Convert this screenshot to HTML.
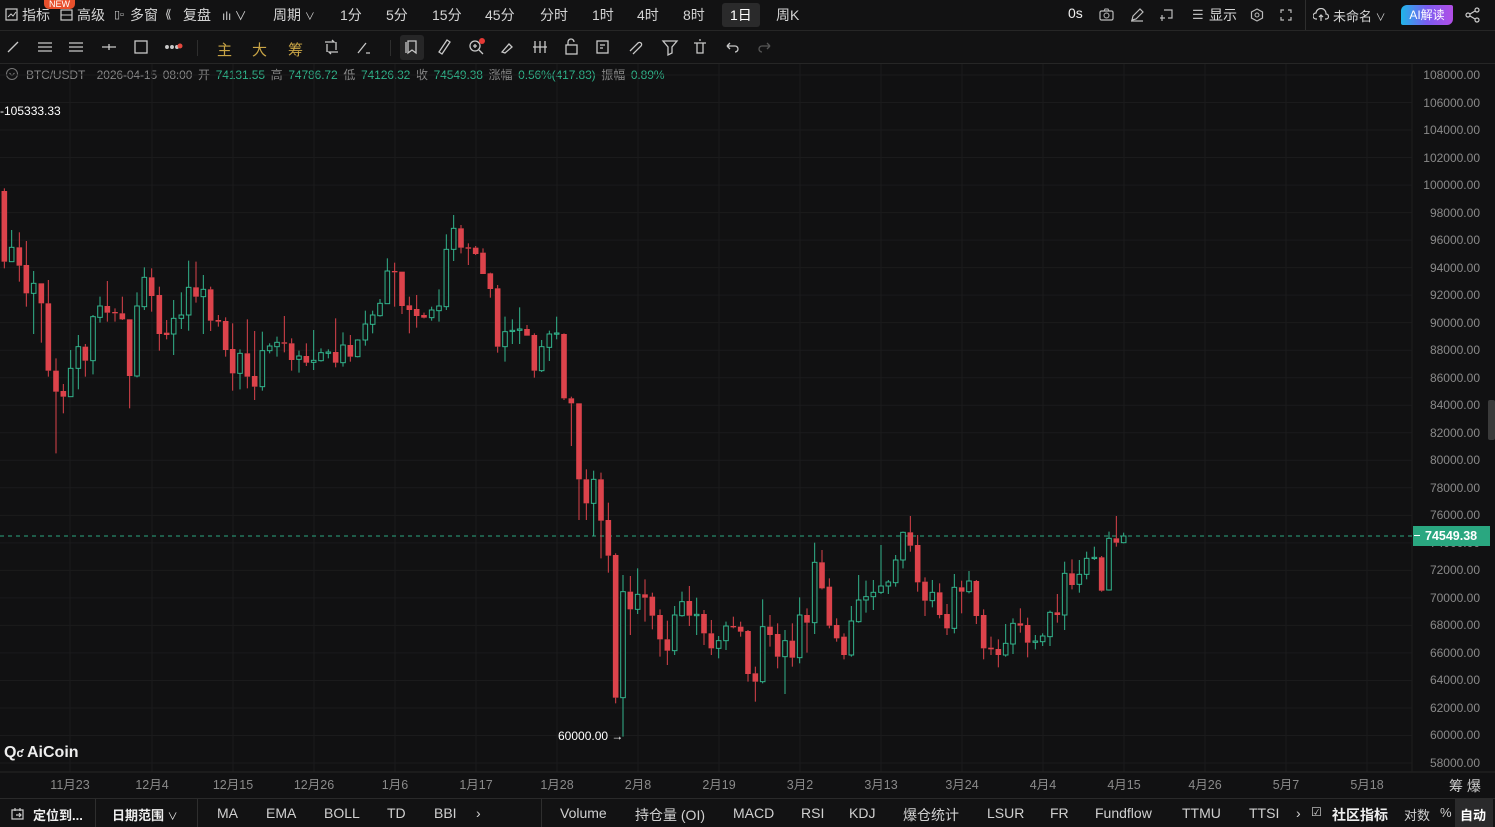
<!DOCTYPE html>
<html><head><meta charset="utf-8">
<style>
*{margin:0;padding:0;box-sizing:border-box}
body{width:1495px;height:827px;overflow:hidden;background:#111112;font-family:"Liberation Sans","Noto Sans CJK SC",sans-serif;color:#cfcfcf;position:relative}
.a{position:absolute;white-space:nowrap}
#top{position:absolute;left:0;top:0;width:1495px;height:31px;border-bottom:1px solid #262626;background:#121213}
#tb{position:absolute;left:0;top:31px;width:1495px;height:33px;border-bottom:1px solid #262626;background:#121213}
.t{font-size:14px;color:#d4d4d4;top:5px}
.px{font-size:12px;color:#8a8a8a;right:15px;text-align:right}
.dt{font-size:12.5px;color:#8a8a8a;top:774px;transform:translateX(-50%)}
#bot{position:absolute;left:0;top:798px;width:1495px;height:29px;border-top:1px solid #2a2a2a;background:#121213}
.b{font-size:14px;color:#d0d0d0;top:805px}
.dv{position:absolute;width:1px;background:#2e2e2e}
</style></head><body>
<div id="top"></div><div id="tb"></div>
<!-- top bar -->
<svg class="a" style="left:5px;top:8px" width="13" height="13"><rect x="1" y="1" width="11" height="11" fill="none" stroke="#ccc" stroke-width="1.2"/><path d="M3 9l3-3 2 2 3-4" fill="none" stroke="#ccc"/></svg>
<div class="a t" style="left:22px">指标</div>
<div class="a" style="left:44px;top:0;width:31px;height:9px;background:#e8502c;border-radius:0 0 5px 5px;font-size:9px;color:#fff;line-height:8px;text-align:center">NEW</div>
<svg class="a" style="left:60px;top:9px" width="13" height="12"><rect x="1" y="1" width="11" height="10" fill="none" stroke="#ccc" stroke-width="1.2"/><path d="M1 6h11" stroke="#ccc"/></svg>
<div class="a t" style="left:77px">高级</div>
<div class="a" style="left:114px;top:8px;font-size:11px;color:#ccc">▯▫</div>
<div class="a t" style="left:130px">多窗</div>
<div class="a" style="left:165px;top:7px;font-size:12px;color:#ccc">⟪</div>
<div class="a t" style="left:183px">复盘</div>
<div class="a" style="left:222px;top:7px;font-size:12px;color:#ccc">ılı ∨</div>
<div class="a t" style="left:273px">周期 <span style="font-size:10px">∨</span></div>
<div class="a t" style="left:340px">1分</div>
<div class="a t" style="left:386px">5分</div>
<div class="a t" style="left:432px">15分</div>
<div class="a t" style="left:485px">45分</div>
<div class="a t" style="left:540px">分时</div>
<div class="a t" style="left:592px">1时</div>
<div class="a t" style="left:637px">4时</div>
<div class="a t" style="left:683px">8时</div>
<div class="a" style="left:722px;top:3px;width:38px;height:24px;background:#2a2a2b;border-radius:3px"></div>
<div class="a t" style="left:730px;color:#fff">1日</div>
<div class="a t" style="left:776px">周K</div>
<div class="a t" style="left:1068px;color:#eee">0s</div>
<svg class="a" style="left:1099px;top:8px" width="15" height="13"><rect x="1" y="3" width="13" height="9" rx="1.5" fill="none" stroke="#bbb" stroke-width="1.2"/><circle cx="7.5" cy="7.5" r="2.5" fill="none" stroke="#bbb"/><path d="M5 3l1-2h3l1 2" fill="none" stroke="#bbb"/></svg>
<svg class="a" style="left:1130px;top:8px" width="14" height="14"><path d="M2 12l1-4 7-7 3 3-7 7z M1 13h12" fill="none" stroke="#bbb" stroke-width="1.2"/></svg>
<svg class="a" style="left:1160px;top:8px" width="14" height="14"><path d="M4 2h8v8h-4 M2 7v6 M0 10h5" fill="none" stroke="#bbb" stroke-width="1.2"/></svg>
<div class="a" style="left:1192px;top:7px;font-size:13px;color:#bbb">☰</div>
<div class="a t" style="left:1209px">显示</div>
<svg class="a" style="left:1250px;top:8px" width="14" height="14"><path d="M7 1l5.5 3v6L7 13 1.5 10V4z" fill="none" stroke="#bbb" stroke-width="1.2"/><circle cx="7" cy="7" r="2" fill="none" stroke="#bbb"/></svg>
<svg class="a" style="left:1280px;top:9px" width="12" height="12"><path d="M1 4V1h3M8 1h3v3M11 8v3H8M4 11H1V8" fill="none" stroke="#bbb" stroke-width="1.2"/></svg>
<div class="dv" style="left:1305px;top:0;height:30px"></div>
<svg class="a" style="left:1313px;top:8px" width="16" height="14"><path d="M4 11H3a3 3 0 0 1 0-6 5 5 0 0 1 10 1 2.5 2.5 0 0 1 0 5h-1 M8 13V7 M6 9l2-2 2 2" fill="none" stroke="#ccc" stroke-width="1.2"/></svg>
<div class="a t" style="left:1333px;font-size:13px;top:6px">未命名 <span style="font-size:10px">∨</span></div>
<div class="a" style="left:1401px;top:5px;width:52px;height:20px;border-radius:6px 2px 6px 2px;background:linear-gradient(90deg,#1fb6e8,#7b5cf0,#b24ee6);font-size:12px;color:#fff;text-align:center;line-height:20px">AI解读</div>
<svg class="a" style="left:1465px;top:7px" width="16" height="16"><circle cx="3" cy="8" r="2" fill="none" stroke="#ccc" stroke-width="1.2"/><circle cx="12" cy="3" r="2" fill="none" stroke="#ccc" stroke-width="1.2"/><circle cx="12" cy="13" r="2" fill="none" stroke="#ccc" stroke-width="1.2"/><path d="M5 7l5-3M5 9l5 3" stroke="#ccc" stroke-width="1.2"/></svg>
<!-- tool row -->
<svg class="a" style="left:0;top:31px" width="800" height="33" fill="none" stroke="#c8c8c8" stroke-width="1.3">
<path d="M8 21l10-10"/>
<path d="M38 12h14M38 16h14M38 20h14"/><path d="M69 12h14M69 16h14M69 20h14"/>
<path d="M102 16h14M109 13v6"/>
<rect x="135" y="10" width="12" height="12"/>
<circle cx="167" cy="16" r="1.3" fill="#ccc"/><circle cx="172" cy="16" r="1.3" fill="#ccc"/><circle cx="177" cy="16" r="1.3" fill="#ccc"/><circle cx="180" cy="15" r="2.5" fill="#e5483e" stroke="none"/>
<path d="M325 11h9l-2-2M338 21h-9l2 2M327 13v8M336 11v8"/>
<path d="M358 22l8-10M366 22l4 0"/>
<rect x="400" y="4" width="24" height="25" rx="3" fill="#262627" stroke="none"/>
<path d="M406 11v11M408 10h8v12l-4-3-4 3z"/>
<path d="M439 21l8-12 3 2-8 12z"/>
<circle cx="475" cy="15" r="5"/><path d="M479 19l4 4M473 15h4M475 13v4"/><circle cx="482" cy="10" r="3" fill="#e53935" stroke="none"/>
<path d="M502 21l7-8 3 3-7 6z"/>
<path d="M535 10v12M540 10v12M545 10v12M533 16h14"/>
<rect x="566" y="14" width="11" height="9"/><path d="M568 14v-3a3 3 0 0 1 6 0"/>
<rect x="597" y="10" width="11" height="12"/><path d="M600 14h5M600 17h3"/>
<path d="M630 20l8-8a2 2 0 0 1 3 3l-8 8"/>
<path d="M663 10h14l-5 6v6l-4 2v-8z"/>
<path d="M694 12h12M697 12v10h6V12M699 9h2"/>
<path d="M727 15h8a3 3 0 0 1 0 6M727 15l3-3M727 15l3 3"/>
<path d="M770 15h-8a3 3 0 0 0 0 6M770 15l-3-3M770 15l-3 3" stroke="#555"/>
</svg>
<div class="dv" style="left:197px;top:40px;height:16px"></div>
<div class="dv" style="left:390px;top:40px;height:16px"></div>
<div class="a" style="left:217px;top:39px;font-size:15px;color:#c9a546">主</div>
<div class="a" style="left:252px;top:39px;font-size:15px;color:#c9a546">大</div>
<div class="a" style="left:288px;top:39px;font-size:15px;color:#c9a546">筹</div>
<!-- info row -->
<svg class="a" style="left:5px;top:67px" width="14" height="14"><circle cx="7" cy="7" r="5.5" fill="none" stroke="#777"/><path d="M4.5 6l2.5 2.5L9.5 6" fill="none" stroke="#777"/></svg>
<div class="a" style="left:26px;top:66px;font-size:12px;letter-spacing:-0.1px;word-spacing:2.5px;color:#888">BTC/USDT&nbsp; 2026-04-15 08:00 开 <span style="color:#2fb38a">74131.55</span> 高 <span style="color:#2fb38a">74786.72</span> 低 <span style="color:#2fb38a">74126.32</span> 收 <span style="color:#2fb38a">74549.38</span> 涨幅 <span style="color:#2fb38a">0.56%(417.83)</span> 振幅 <span style="color:#2fb38a">0.89%</span></div>
<!-- chart -->
<svg id="ch" class="a" style="left:0;top:0" width="1495" height="798"></svg>
<div id="pl"></div>
<div class="a" style="left:1413px;top:526px;width:77px;height:20px;background:#2aa780;color:#fff;font-size:12.5px;font-weight:bold;line-height:20px;padding-left:12px">74549.38</div>
<div class="a" style="left:1414px;top:535px;width:6px;height:1px;background:#fff"></div>
<div class="a" style="left:0;top:104px;font-size:12px;color:#fff">-105333.33</div>
<div class="a" style="left:558px;top:729px;font-size:12px;color:#fff">60000.00 →</div>
<div class="a" style="left:4px;top:744px;font-size:16px;font-weight:bold;color:#eee">Q<span style="font-size:12px">ƈ</span> AiCoin</div>
<div class="a" style="left:1488px;top:400px;width:7px;height:40px;background:#3a3a3a;border-radius:2px"></div>
<div id="dl"></div>
<div class="a" style="left:1449px;top:776px;font-size:14px;color:#ccc">筹 爆</div>
<!-- bottom -->
<div id="bot"></div>
<svg class="a" style="left:10px;top:806px" width="15" height="15"><path d="M2 4h11v9H2z M5 2v3M10 2v3 M6 9h5 M9 7l2 2-2 2" fill="none" stroke="#ccc" stroke-width="1.2"/></svg>
<div class="a b" style="left:33px;font-weight:bold;color:#eee;font-size:13px">定位到...</div>
<div class="dv" style="left:95px;top:799px;height:28px"></div>
<div class="a b" style="left:112px;font-weight:bold;color:#eee;font-size:13px">日期范围 <span style="font-size:10px;font-weight:normal">∨</span></div>
<div class="dv" style="left:197px;top:799px;height:28px"></div>
<div class="a b" style="left:217px">MA</div><div class="a b" style="left:266px">EMA</div><div class="a b" style="left:324px">BOLL</div><div class="a b" style="left:387px">TD</div><div class="a b" style="left:434px">BBI</div><div class="a b" style="left:476px">›</div>
<div class="dv" style="left:541px;top:799px;height:28px"></div>
<div class="a b" style="left:560px">Volume</div><div class="a b" style="left:635px">持仓量 (OI)</div><div class="a b" style="left:733px">MACD</div><div class="a b" style="left:801px">RSI</div><div class="a b" style="left:849px">KDJ</div><div class="a b" style="left:903px">爆仓统计</div><div class="a b" style="left:987px">LSUR</div><div class="a b" style="left:1050px">FR</div><div class="a b" style="left:1095px">Fundflow</div><div class="a b" style="left:1182px">TTMU</div><div class="a b" style="left:1249px">TTSI</div><div class="a b" style="left:1296px">›</div>
<div class="a b" style="left:1311px;font-size:12px">☑</div>
<div class="a b" style="left:1332px;font-weight:bold;color:#eee">社区指标</div>
<div class="a b" style="left:1404px;font-size:13px">对数</div><div class="a b" style="left:1440px;font-size:13px">%</div>
<div class="a" style="left:1455px;top:799px;width:38px;height:28px;background:#2a2a2b"></div>
<div class="a b" style="left:1460px;font-size:13px;color:#fff;font-weight:bold">自动</div>
<script>
var s='';
for(var p=108000;p>=58000;p-=2000){var y=75+(108000-p)*0.01376;s+='<line x1="0" x2="1412" y1="'+y+'" y2="'+y+'" stroke="#1b1b1c"/>';}
var dts=[["11月23",70],["12月4",152],["12月15",233],["12月26",314],["1月6",395],["1月17",476],["1月28",557],["2月8",638],["2月19",719],["3月2",800],["3月13",881],["3月24",962],["4月4",1043],["4月15",1124],["4月26",1205],["5月7",1286],["5月18",1367]];
var dh='';
dts.forEach(function(d){s+='<line x1="'+d[1]+'" x2="'+d[1]+'" y1="64" y2="772" stroke="#1b1b1c"/>';dh+='<div class="a dt" style="left:'+d[1]+'px">'+d[0]+'</div>';});
document.getElementById('dl').innerHTML=dh;
s+='<line x1="0" x2="1495" y1="772" y2="772" stroke="#262626"/><line x1="1412" x2="1412" y1="64" y2="772" stroke="#1e1e1e"/>';
var ph='';
for(var p=108000;p>=58000;p-=2000){var y=75+(108000-p)*0.01376;ph+='<div class="a px" style="top:'+(y-7)+'px">'+p+'.00</div>';}
document.getElementById('pl').innerHTML=ph;
s+='<line x1="0" x2="1412" y1="536" y2="536" stroke="#2aa780" stroke-dasharray="4,4"/>';
var R='#dc434b',G='#32b48c';
function seg(ox,oy,arr){arr.forEach(function(c){var x=ox+c[0]/3,g=c[1]=='g',col=g?G:R;var b1=oy+c[2]/3,b2=oy+c[3]/3,w1=oy+c[4]/3,w2=oy+c[5]/3;if(b2-b1<1.2)b2=b1+1.2;
s+='<line x1="'+x+'" x2="'+x+'" y1="'+w1+'" y2="'+b1+'" stroke="'+col+'"/><line x1="'+x+'" x2="'+x+'" y1="'+b2+'" y2="'+w2+'" stroke="'+col+'"/>';
if(g)s+='<rect x="'+(x-2.3)+'" y="'+b1+'" width="4.6" height="'+(b2-b1)+'" fill="#111112" stroke="'+col+'"/>';else s+='<rect x="'+(x-2.8)+'" y="'+b1+'" width="5.6" height="'+(b2-b1)+'" fill="'+col+'"/>';});}
seg(0,180,[[13,'r',33,245,25,265],[35,'g',202,245,150,245],[58,'r',202,257,157,305],[79,'r',255,340,183,380],[101,'g',310,340,273,462],[124,'r',310,370,310,488],[145,'r',370,572,300,590],[168,'r',572,635,535,820],[190,'r',633,650,612,700],[212,'g',565,650,510,650],[235,'g',500,565,465,628],[256,'r',500,542,492,590],[279,'g',410,542,405,583],[300,'g',378,412,350,428],[322,'r',378,398,303,425],[345,'r',396,400,385,425],[367,'r',400,418,350,420],[389,'r',418,588,418,685],[411,'g',378,588,337,592],[433,'g',292,380,262,390],[455,'r',292,348,265,395],[478,'r',345,462,320,512],[500,'r',458,465,420,478],[521,'g',415,462,360,525],[544,'g',405,415,337,447],[566,'g',322,405,242,452],[588,'r',322,350,245,368],[610,'g',328,350,285,462],[632,'r',328,422,320,453],[655,'r',420,425,405,440],[677,'r',423,510,412,530],[698,'r',507,580,430,632],[720,'g',520,580,508,628],[742,'r',520,590,418,625],[764,'r',588,620,453,660],[787,'g',512,620,455,632],[809,'g',498,512,490,520],[831,'g',487,500,470,530],[853,'r',487,491,408,517]]);
seg(280,200,[[35,'r',430,480,415,512],[57,'g',468,478,452,518],[79,'r',468,488,430,498],[101,'g',481,487,390,510],[123,'g',458,482,445,485],[145,'g',456,460,448,475],[167,'r',456,488,355,502],[189,'g',435,488,397,500],[211,'r',435,470,405,485],[233,'g',420,470,418,472],[256,'g',372,420,332,437],[278,'g',345,373,332,400],[300,'g',310,347,297,350],[322,'g',213,311,175,311],[344,'r',213,217,188,320],[366,'r',215,318,215,342],[388,'r',316,330,290,400],[410,'r',327,348,285,383],[432,'r',345,353,338,355],[455,'g',330,353,320,362],[477,'g',318,332,268,365],[499,'g',148,320,103,330],[521,'g',85,148,45,183],[543,'r',85,143,75,160],[565,'r',142,146,130,195],[587,'r',143,162,138,165],[609,'r',158,222,145,222],[631,'r',220,267,218,293],[653,'r',265,440,255,458],[675,'g',395,440,350,485],[697,'g',391,394,358,432],[719,'g',387,391,322,432],[741,'r',387,407,375,407],[763,'r',405,512,400,533],[785,'g',440,512,420,516],[808,'g',402,442,392,483],[830,'g',399,402,350,418],[852,'r',402,595,400,600]]);
seg(550,320,[[64,'r',235,250,230,378],[87,'r',250,478,250,600],[109,'r',478,550,448,600],[131,'g',478,550,452,648],[153,'r',478,602,458,715],[175,'r',600,707,548,758],[197,'r',705,1133,700,1150],[219,'g',815,1133,765,1250],[241,'r',815,868,768,945],[263,'g',823,868,745,882],[285,'r',823,833,778,905],[307,'r',830,887,818,928],[330,'r',885,958,868,1010],[352,'r',958,992,902,1035],[374,'g',885,992,858,1005],[396,'g',845,887,815,890],[418,'r',843,887,798,918],[440,'g',883,887,833,945],[462,'r',882,940,870,975],[484,'r',940,985,900,1005],[506,'g',962,985,948,1015],[528,'g',918,962,905,990],[550,'r',918,922,890,925],[572,'r',920,935,905,950],[594,'r',933,1062,930,1085],[616,'r',1060,1085,1040,1145],[638,'g',920,1085,838,1090],[660,'r',920,945,885,980],[683,'r',942,1010,910,1045],[705,'g',962,1010,930,1122],[727,'r',962,1013,910,1040],[749,'g',885,1013,832,1030],[771,'r',885,908,865,998],[794,'g',727,908,668,942],[816,'r',727,805,690,808],[838,'r',800,917,775,925],[860,'r',915,955,895,965]]);
seg(830,500,[[42,'r',410,465,400,478],[64,'g',363,465,318,470],[86,'g',300,365,225,368],[108,'g',290,300,242,338],[130,'g',277,290,240,330],[153,'g',258,277,135,282],[175,'g',246,258,240,282],[197,'g',180,248,165,260],[219,'g',97,180,95,205],[241,'r',97,137,48,155],[263,'r',135,247,105,275],[285,'r',245,302,232,348],[307,'g',277,302,240,322],[329,'r',277,345,250,355],[351,'r',342,385,312,405],[373,'g',262,385,222,400],[395,'r',262,275,242,340],[417,'g',243,275,213,280],[439,'r',243,348,240,372],[461,'r',345,445,328,478],[483,'r',443,448,410,465],[505,'r',447,465,418,502],[527,'g',430,465,372,470],[549,'g',370,432,355,462],[571,'r',370,377,325,398],[593,'r',375,428,353,472],[616,'g',423,427,405,448],[638,'g',408,425,400,438],[660,'g',337,410,332,438],[682,'r',337,345,282,368],[704,'g',220,345,185,390],[726,'r',220,255,178,268],[748,'g',223,253,180,278],[770,'g',175,223,155,238],[793,'g',172,175,140,180],[815,'r',172,272,168,275],[837,'g',115,270,95,272],[859,'r',115,128,48,140],[881,'g',108,128,98,130]]);
document.getElementById('ch').innerHTML=s;
</script>
</body></html>
